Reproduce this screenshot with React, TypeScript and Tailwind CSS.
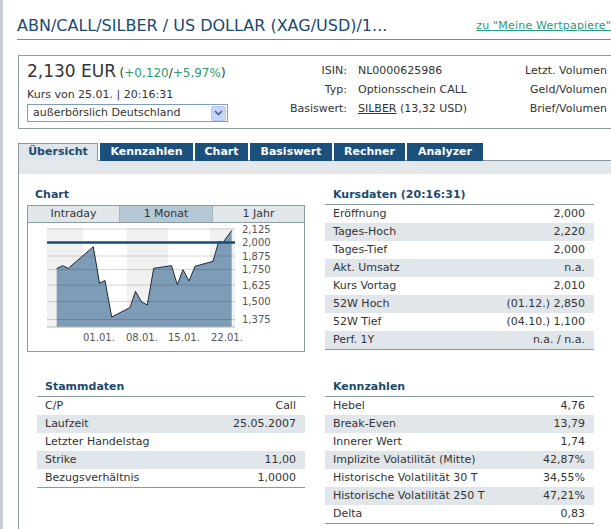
const kursdaten = [
  ["Eröffnung", "2,000"],
  ["Tages-Hoch", "2,220"],
  ["Tages-Tief", "2,000"],
  ["Akt. Umsatz", "n.a."],
  ["Kurs Vortag", "2,010"],
  ["52W Hoch", "(01.12.) 2,850"],
  ["52W Tief", "(04.10.) 1,100"],
  ["Perf. 1Y", "n.a. / n.a."],
];

const stammdaten = [
  ["C/P", "Call"],
  ["Laufzeit", "25.05.2007"],
  ["Letzter Handelstag", ""],
  ["Strike", "11,00"],
  ["Bezugsverhältnis", "1,0000"],
];

const kennzahlen = [
  ["Hebel", "4,76"],
  ["Break-Even", "13,79"],
  ["Innerer Wert", "1,74"],
  ["Implizite Volatilität (Mitte)", "42,87%"],
  ["Historische Volatilität 30 T", "34,55%"],
  ["Historische Volatilität 250 T", "47,21%"],
  ["Delta", "0,83"],
];

const tabs = [
  { label: "Kennzahlen", w: "w-[93px]" },
  { label: "Chart", w: "w-[53px]" },
  { label: "Basiswert", w: "w-[82px]" },
  { label: "Rechner", w: "w-[71px]" },
  { label: "Analyzer", w: "w-[76px]" },
];

// price line, page coordinates
const pts: [number, number][] = [
  [56.7, 268.5], [62.7, 265.7], [68.3, 268.3], [93.3, 246.7], [99.5, 283.3],
  [105, 280.5], [111.7, 317], [130, 307.5], [135.5, 291.3], [141.7, 302],
  [147.3, 305], [153.7, 268.3], [171.5, 265.7], [177.3, 284.7], [183, 269.7],
  [189, 281], [195, 266.3], [213, 261.3], [218.7, 241.7], [223, 242.5],
  [231.7, 230.5],
];

const grid = [
  { y: 229, label: "2,125" },
  { y: 242.5, label: "2,000" },
  { y: 256, label: "1,875" },
  { y: 269.5, label: "1,750" },
  { y: 285, label: "1,625" },
  { y: 301.5, label: "1,500" },
  { y: 319.5, label: "1,375" },
];

function DataTable({ title, rows, className }: { title: string; rows: string[][]; className?: string }) {
  return (
    <div className={className}>
      <div className="h-[14px] pl-[8px] text-[11px] leading-[14px] font-bold text-[#1d4a6c]">{title}</div>
      <div className="mt-[2px] border-y border-[#8a979f]">
        {rows.map(([label, value], i) => (
          <div
            key={label}
            className={`flex h-[18px] items-center justify-between pr-[9px] pl-[8px] ${i % 2 ? "bg-[#e1e6eb]" : ""}`}
          >
            <span>{label}</span>
            <span>{value}</span>
          </div>
        ))}
      </div>
    </div>
  );
}

function PriceChart() {
  const line = pts.map((p) => p.join(",")).join(" ");
  const area = `${line} 231.7,327 56.7,327`;
  return (
    <svg width="276" height="128" className="block">
      <g transform="translate(-28,-223)">
        <rect x="47" y="228" width="36" height="99" fill="#f1f1f1" />
        <rect x="127" y="228" width="41" height="99" fill="#f1f1f1" />
        <rect x="210" y="228" width="25" height="99" fill="#f1f1f1" />
        <polygon points={area} fill="#7e9cb6" />
        {grid.map((g) =>
          g.label === "2,000" ? null : (
            <line key={g.y} x1="47" x2="235" y1={g.y} y2={g.y} stroke="#000" strokeOpacity="0.16" />
          )
        )}
        <line x1="47" x2="235" y1="327" y2="327" stroke="#b4b4b4" />
        <polyline points={line} fill="none" stroke="#1f2c38" strokeWidth="1" />
        <line x1="47" x2="235" y1="242.5" y2="242.5" stroke="#174b78" strokeWidth="2.5" />
        {grid.map((g) => (
          <text key={g.label} x="242" y={g.y + 3.5} fontSize="10" fill="#555">
            {g.label}
          </text>
        ))}
        {[
          ["01.01.", 83],
          ["08.01.", 126],
          ["15.01.", 168],
          ["22.01.", 211],
        ].map(([t, x]) => (
          <text key={t} x={x} y="341" fontSize="10" fill="#555">
            {t}
          </text>
        ))}
      </g>
    </svg>
  );
}

export default function App() {
  return (
    <div className="flex h-[529px] w-[611px] overflow-hidden bg-white font-['DejaVu_Sans',Verdana,sans-serif] text-[11px] text-[#333]">
      <div className="w-[3px] shrink-0 bg-[#c9cdd4]" />
      <div className="w-[700px] shrink-0 pl-[14px]">
        {/* title */}
        <div className="flex w-[594px] items-end justify-between border-b border-[#6f8c9c] pt-[16px] pb-[3px]">
          <h1 className="text-[16px] leading-[20px] font-normal text-[#1a4a6e]">
            ABN/CALL/SILBER / US DOLLAR (XAG/USD)/1...
          </h1>
          <a className="mb-[3px] text-[11px] leading-[14px] tracking-[0.2px] whitespace-nowrap text-[#2a9a7e] underline">
            zu "Meine Wertpapiere"
          </a>
        </div>

        {/* quote box */}
        <div className="mt-[15px] ml-px flex h-[74px] w-[680px] border border-[#8d9ba3]">
          <div className="w-[261px] pt-[5px] pl-[8px]">
            <div className="leading-[20px] whitespace-nowrap">
              <span className="text-[17px] text-[#333]">2,130 EUR</span>{" "}
              <span className="text-[12px]">
                (<span className="text-[#2c9a70]">+0,120</span>/<span className="text-[#2c9a70]">+5,97%</span>)
              </span>
            </div>
            <div className="mt-[4px] leading-[14px]">Kurs von 25.01. | 20:16:31</div>
            <div className="mt-[2px] flex h-[18px] w-[201px] items-center border border-[#7f9db9] bg-white">
              <span className="flex-1 pl-[5px] text-[11px] whitespace-nowrap">außerbörslich Deutschland</span>
              <span className="mr-px flex h-[15px] w-[15px] items-center justify-center rounded-[2px] border border-[#b5c7f0] bg-[#c6d6fb]">
                <svg width="9" height="6" viewBox="0 0 9 6">
                  <path d="M1 1 L4.5 4.5 L8 1" fill="none" stroke="#4d6185" strokeWidth="1.6" />
                </svg>
              </span>
            </div>
          </div>
          <div className="grid w-[230px] grid-cols-[67px_1fr] content-start gap-x-[11px] pt-[5px]">
            {[
              ["ISIN:", "NL0000625986"],
              ["Typ:", "Optionsschein CALL"],
              ["Basiswert:", ""],
            ].map(([k, v]) => (
              <div key={k} className="contents">
                <div className="h-[19px] text-right leading-[19px] whitespace-nowrap">{k}</div>
                <div className="h-[19px] leading-[19px] whitespace-nowrap">
                  {k === "Basiswert:" ? (
                    <>
                      <span className="underline">SILBER</span> (13,32 USD)
                    </>
                  ) : (
                    v
                  )}
                </div>
              </div>
            ))}
          </div>
          <div className="w-[97px] pt-[5px] text-right">
            <div className="h-[19px] leading-[19px] whitespace-nowrap">Letzt. Volumen</div>
            <div className="h-[19px] leading-[19px] whitespace-nowrap">Geld/Volumen</div>
            <div className="h-[19px] leading-[19px] whitespace-nowrap">Brief/Volumen</div>
          </div>
        </div>

        {/* tabs + panel */}
        <div className="mt-[14px] ml-px">
          <div className="flex h-[18px] gap-[2px] border-b border-[#8a979f]">
            <div className="relative z-10 flex h-[18px] w-[80px] items-center justify-center border-x border-t border-[#8a979f] bg-[#dee5eb] font-bold text-[#1d4a6c]">
              Übersicht
            </div>
            {tabs.map((t) => (
              <div
                key={t.label}
                className={`flex h-[18px] items-center justify-center bg-[#1b4f7c] pt-px font-bold text-white ${t.w}`}
              >
                {t.label}
              </div>
            ))}
          </div>
          <div className="h-[400px] border-l border-[#8a979f]">
            <div className="h-[13px] bg-[#e3e8ed]" />
            <div className="mt-[14px] flex items-start">
              <div className="w-[306px] pl-[8px]">
                <div className="h-[14px] pl-[8px] leading-[14px] font-bold text-[#1d4a6c]">Chart</div>
                <div className="mt-[3px] h-[147px] w-[278px] border border-[#8d9ba3]">
                  <div className="grid h-[17px] grid-cols-[92px_93px_1fr] border-b border-[#8d9ba3] text-center leading-[16px]">
                    <div className="border-r border-[#a9b4bb] bg-[#e1e6eb]">Intraday</div>
                    <div className="border-r border-[#a9b4bb] bg-[#b5c8d6]">1 Monat</div>
                    <div className="bg-[#e1e6eb]">1 Jahr</div>
                  </div>
                  <PriceChart />
                </div>
              </div>
              <DataTable title="Kursdaten (20:16:31)" rows={kursdaten} className="w-[269px]" />
            </div>
            <div className="mt-[28px] flex items-start">
              <div className="w-[306px] pl-[18px]">
                <DataTable title="Stammdaten" rows={stammdaten} className="w-[268px]" />
              </div>
              <DataTable title="Kennzahlen" rows={kennzahlen} className="w-[269px]" />
            </div>
          </div>
        </div>
      </div>
    </div>
  );
}
